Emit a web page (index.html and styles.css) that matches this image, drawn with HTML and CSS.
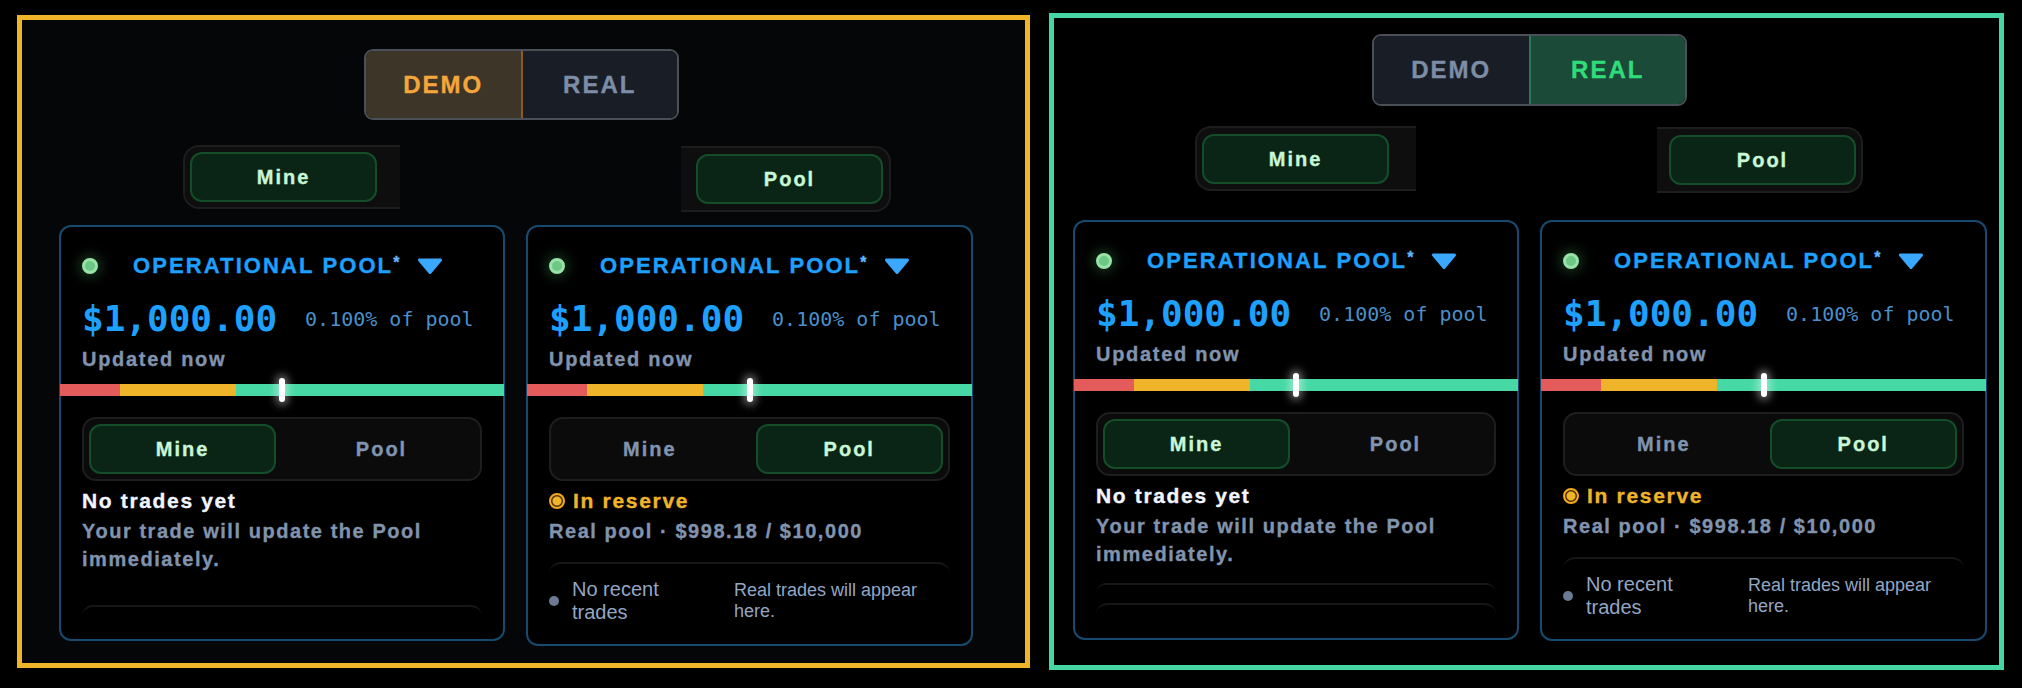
FILE: index.html
```html
<!DOCTYPE html>
<html lang="en">
<head>
  <meta charset="UTF-8">
  <meta name="viewport" content="width=device-width, initial-scale=1.0">
  <title>Pool Cards</title>
  <link rel="stylesheet" href="styles.css">
</head>
<body>
  <div class="stage">

    <!-- Demo mode -->
    <section class="panel panel-demo">
      <div class="mode-toggle">
        <div class="mode-btn demo active">DEMO</div>
        <div class="mode-btn real">REAL</div>
      </div>

      <div class="scope-row">
        <div class="scope-pill pill-left"><span class="scope-btn">Mine</span></div>
        <div class="scope-pill pill-right"><span class="scope-btn">Pool</span></div>
      </div>

      <div class="cards">
        <article class="card">
          <div class="card-head">
            <span class="status-dot"></span>
            <span class="card-title">OPERATIONAL POOL<sup>*</sup></span>
            <svg class="caret" width="26" height="18" viewBox="0 0 26 18"><path d="M2.5 3h21l-10.5 12.5z" fill="#3aa8ff" stroke="#3aa8ff" stroke-width="3" stroke-linejoin="round"/></svg>
          </div>
          <div class="amount-row">
            <span class="amount">$1,000.00</span>
            <span class="share">0.100% of pool</span>
          </div>
          <div class="updated">Updated now</div>
          <div class="meter"><span class="meter-mark"></span></div>
          <div class="seg">
            <div class="seg-btn active">Mine</div>
            <div class="seg-btn">Pool</div>
          </div>
          <div class="note-title">No trades yet</div>
          <div class="note-text">Your trade will update the Pool immediately.</div>
          <div class="trade-box trade-box-empty"></div>
        </article>

        <article class="card">
          <div class="card-head">
            <span class="status-dot"></span>
            <span class="card-title">OPERATIONAL POOL<sup>*</sup></span>
            <svg class="caret" width="26" height="18" viewBox="0 0 26 18"><path d="M2.5 3h21l-10.5 12.5z" fill="#3aa8ff" stroke="#3aa8ff" stroke-width="3" stroke-linejoin="round"/></svg>
          </div>
          <div class="amount-row">
            <span class="amount">$1,000.00</span>
            <span class="share">0.100% of pool</span>
          </div>
          <div class="updated">Updated now</div>
          <div class="meter"><span class="meter-mark"></span></div>
          <div class="seg">
            <div class="seg-btn">Mine</div>
            <div class="seg-btn active">Pool</div>
          </div>
          <div class="reserve"><span class="reserve-ring"></span>In reserve</div>
          <div class="note-text">Real pool · $998.18 / $10,000</div>
          <div class="trade-box">
            <div class="trade-row">
              <span class="trade-dot"></span>
              <span class="trade-label">No recent trades</span>
              <span class="trade-hint">Real trades will appear here.</span>
            </div>
          </div>
        </article>
      </div>
    </section>

    <!-- Real mode -->
    <section class="panel panel-real">
      <div class="mode-toggle">
        <div class="mode-btn demo">DEMO</div>
        <div class="mode-btn real active">REAL</div>
      </div>

      <div class="scope-row">
        <div class="scope-pill pill-left"><span class="scope-btn">Mine</span></div>
        <div class="scope-pill pill-right"><span class="scope-btn">Pool</span></div>
      </div>

      <div class="cards">
        <article class="card">
          <div class="card-head">
            <span class="status-dot"></span>
            <span class="card-title">OPERATIONAL POOL<sup>*</sup></span>
            <svg class="caret" width="26" height="18" viewBox="0 0 26 18"><path d="M2.5 3h21l-10.5 12.5z" fill="#3aa8ff" stroke="#3aa8ff" stroke-width="3" stroke-linejoin="round"/></svg>
          </div>
          <div class="amount-row">
            <span class="amount">$1,000.00</span>
            <span class="share">0.100% of pool</span>
          </div>
          <div class="updated">Updated now</div>
          <div class="meter"><span class="meter-mark"></span></div>
          <div class="seg">
            <div class="seg-btn active">Mine</div>
            <div class="seg-btn">Pool</div>
          </div>
          <div class="note-title">No trades yet</div>
          <div class="note-text">Your trade will update the Pool immediately.</div>
          <div class="trade-box trade-box-empty trade-box-first"></div>
          <div class="trade-box trade-box-empty"></div>
        </article>

        <article class="card">
          <div class="card-head">
            <span class="status-dot"></span>
            <span class="card-title">OPERATIONAL POOL<sup>*</sup></span>
            <svg class="caret" width="26" height="18" viewBox="0 0 26 18"><path d="M2.5 3h21l-10.5 12.5z" fill="#3aa8ff" stroke="#3aa8ff" stroke-width="3" stroke-linejoin="round"/></svg>
          </div>
          <div class="amount-row">
            <span class="amount">$1,000.00</span>
            <span class="share">0.100% of pool</span>
          </div>
          <div class="updated">Updated now</div>
          <div class="meter"><span class="meter-mark"></span></div>
          <div class="seg">
            <div class="seg-btn">Mine</div>
            <div class="seg-btn active">Pool</div>
          </div>
          <div class="reserve"><span class="reserve-ring"></span>In reserve</div>
          <div class="note-text">Real pool · $998.18 / $10,000</div>
          <div class="trade-box">
            <div class="trade-row">
              <span class="trade-dot"></span>
              <span class="trade-label">No recent trades</span>
              <span class="trade-hint">Real trades will appear here.</span>
            </div>
          </div>
        </article>
      </div>
    </section>

  </div>
</body>
</html>
```

FILE: styles.css
```css
body {
  margin: 0;
  background-color: #000;
  font-family: 'Liberation Sans', Arial, sans-serif;
  color: #8193ad;
  width: 2022px;
  height: 688px;
  overflow: hidden;
}

.stage {
  display: flex;
  align-items: flex-start;
  gap: 19px;
  padding: 13px 0 0 17px;
}

/* heavier strokes, like the ClearType bold of the original */
.mode-btn,
.scope-btn,
.card-title,
.updated,
.seg-btn,
.note-title,
.note-text,
.reserve {
  -webkit-text-stroke: 0.35px currentColor;
}

/* panels */
.panel {
  box-sizing: border-box;
  border: 5px solid;
  display: flex;
  flex-direction: column;
  align-items: flex-start;
}

.panel-demo {
  width: 1013px;
  height: 653px;
  margin-top: 2px;
  border-color: #f0b429;
  background-color: #050608;
}

.panel-real {
  width: 955px;
  height: 657px;
  border-color: #46d6a3;
  background-color: #000;
}

/* demo / real switch */
.mode-toggle {
  box-sizing: border-box;
  display: flex;
  width: 315px;
  height: 71px;
  border: 2px solid #4b5058;
  border-radius: 9px;
  overflow: hidden;
}

.panel-demo .mode-toggle {
  margin: 29px 0 0 342px;
}

.panel-real .mode-toggle {
  margin: 16px 0 0 318px;
  height: 72px;
}

.mode-btn {
  flex: 1;
  display: flex;
  align-items: center;
  justify-content: center;
  background-color: #181d26;
  color: #7d8da6;
  font-size: 24px;
  font-weight: 700;
  letter-spacing: 2px;
}

.mode-btn.demo.active {
  background-color: #3e3529;
  color: #f4a63a;
  border-right: 2px solid #8d5a22;
}

.mode-btn.real.active {
  background-color: #1c4a38;
  color: #2fdc7a;
  border-left: 2px solid #2b7a55;
}

/* mine / pool pills above cards */
.scope-row {
  display: flex;
  align-items: flex-start;
}

.panel-demo .scope-row {
  margin: 25px 0 0 161px;
}

.panel-real .scope-row {
  margin: 20px 0 0 141px;
}

.scope-pill {
  box-sizing: border-box;
  display: flex;
  background-color: #0e0e0e;
  border: 2px solid #1d1d1d;
}

.pill-left {
  width: 217px;
  height: 64px;
  padding: 5px;
  border-right: none;
  border-radius: 16px 0 0 16px;
}

.pill-right {
  width: 210px;
  height: 66px;
  margin: 1px 0 0 281px;
  padding: 6px 6px 7px 15px;
  border-left: none;
  border-radius: 0 16px 16px 0;
}

.panel-real .pill-left {
  width: 221px;
  height: 65px;
  padding-top: 6px;
}

.panel-real .pill-right {
  width: 206px;
  margin-left: 241px;
  padding-left: 12px;
  padding-right: 5px;
}

.scope-btn {
  box-sizing: border-box;
  width: 187px;
  height: 50px;
  display: flex;
  align-items: center;
  justify-content: center;
  background-color: #0a2416;
  border: 2px solid #134d2a;
  border-radius: 12px;
  color: #c8f7d6;
  font-size: 20px;
  font-weight: 700;
  letter-spacing: 2px;
}

/* cards */
.cards {
  display: flex;
  align-items: flex-start;
  gap: 21px;
}

.panel-demo .cards {
  margin: 13px 0 0 37px;
}

.panel-real .cards {
  margin: 27px 0 0 19px;
}

.card {
  box-sizing: border-box;
  width: 446px;
  padding: 23px 21px 12px;
  background-color: #000;
  border: 2px solid #174a6e;
  border-radius: 12px;
}

.card + .card {
  width: 447px;
}

.card-head {
  display: flex;
  align-items: center;
  height: 32px;
}

.status-dot {
  box-sizing: border-box;
  width: 16px;
  height: 16px;
  margin-right: 35px;
  border-radius: 50%;
  background-color: #6cc884;
  border: 3px solid #98e3a8;
  box-shadow: 0 0 12px 4px rgba(90, 210, 120, 0.22);
}

.card-title {
  color: #1ea0ff;
  font-size: 22px;
  font-weight: 700;
  letter-spacing: 2.1px;
  line-height: 32px;
}

.card-title sup {
  font-size: 16px;
  color: #62b6ff;
  vertical-align: 5px;
  line-height: 0;
  letter-spacing: 0;
}

.caret {
  margin-left: 18px;
}

.amount-row {
  display: flex;
  align-items: center;
  height: 44px;
  margin-top: 15px;
}

.amount {
  font-family: 'DejaVu Sans Mono', monospace;
  font-size: 36px;
  font-weight: 700;
  color: #1ea0ff;
  line-height: 44px;
}

.share {
  margin-left: 28px;
  font-family: 'DejaVu Sans Mono', monospace;
  font-size: 20px;
  color: #4b8fca;
}

.updated {
  margin-top: 6px;
  font-size: 20px;
  font-weight: 700;
  letter-spacing: 1.7px;
  line-height: 24px;
}

.meter {
  position: relative;
  height: 12px;
  margin: 13px -22px 0;
  background: linear-gradient(90deg, #e35b5b 0 13.5%, #f0b42a 13.5% 39.6%, #46d8a5 39.6%);
}

.meter-mark {
  position: absolute;
  left: 50%;
  top: -6px;
  width: 6px;
  height: 24px;
  margin-left: -3px;
  border-radius: 3px;
  background-color: #fff;
  box-shadow: 0 0 8px 3px rgba(255, 255, 255, 0.45);
}

.seg {
  box-sizing: border-box;
  display: flex;
  gap: 12px;
  height: 64px;
  margin-top: 21px;
  padding: 5px;
  background-color: #0b0b0c;
  border: 2px solid #1e1e21;
  border-radius: 14px;
}

.seg-btn {
  flex: 1;
  display: flex;
  align-items: center;
  justify-content: center;
  border: 2px solid transparent;
  border-radius: 12px;
  color: #8094b0;
  font-size: 20px;
  font-weight: 700;
  letter-spacing: 2px;
}

.seg-btn.active {
  background-color: #0a2416;
  border-color: #134d2a;
  color: #c8f7d6;
}

.note-title {
  margin-top: 7px;
  color: #f1f5ff;
  font-size: 21px;
  font-weight: 700;
  letter-spacing: 1.65px;
  line-height: 26px;
}

.note-text {
  margin-top: 3px;
  font-size: 20px;
  font-weight: 700;
  letter-spacing: 1.55px;
  line-height: 28px;
}

.reserve {
  display: flex;
  align-items: center;
  gap: 8px;
  margin-top: 7px;
  color: #f0b429;
  font-size: 21px;
  font-weight: 700;
  letter-spacing: 1.7px;
  line-height: 26px;
}

.reserve-ring {
  box-sizing: border-box;
  width: 16px;
  height: 16px;
  border-radius: 50%;
  border: 2px solid #f5a623;
  background: radial-gradient(circle, #f0b429 0 4px, #4a3208 5px);
}

.trade-box {
  margin-top: 17px;
  padding: 14px 0 8px;
  border-top: 2px solid #161616;
  border-radius: 12px;
}

.trade-box-empty {
  height: 22px;
  padding: 0;
  margin-top: 32px;
  box-sizing: border-box;
}

.trade-box-first {
  margin-top: 15px;
  height: 20px;
}

.trade-box-first + .trade-box-empty {
  margin-top: 0;
  height: 23px;
}

.trade-row {
  display: flex;
  align-items: center;
}

.trade-dot {
  width: 10px;
  height: 10px;
  border-radius: 50%;
  background-color: #6b7b93;
}

.trade-label {
  width: 130px;
  margin-left: 13px;
  color: #93a6c2;
  font-size: 20px;
  line-height: 23px;
}

.trade-hint {
  width: 216px;
  margin-left: auto;
  color: #93a6c2;
  font-size: 18px;
  line-height: 21px;
}
```
